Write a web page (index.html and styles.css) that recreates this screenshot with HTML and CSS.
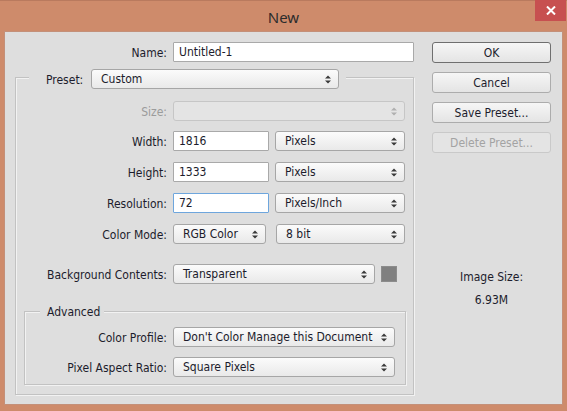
FILE: index.html
```html
<!DOCTYPE html>
<html>
<head>
<meta charset="utf-8">
<title>New</title>
<link rel="stylesheet" href="styles.css">
</head>
<body>
<div class="window">
  <div class="titlebar">
    <span></span>
    <div class="title">New</div>
    <div class="close"><svg width="10" height="9" viewBox="0 0 10 9"><path d="M1 0.5 L9 8.5 M9 0.5 L1 8.5" stroke="#fff" stroke-width="2"/></svg></div>
  </div>
  <div class="dialog">
    <div class="form">
      <div class="row">
        <div class="lbl lbl-top">Name:</div>
        <div class="input w-name">Untitled-1</div>
      </div>
      <div class="group outer">
        <div class="legend preset">
          <div class="legend-lbl">Preset:</div>
          <div class="select w-preset">Custom<svg class="arr" width="6" height="9" viewBox="0 0 6 9"><path d="M0 3.5 L3 0.5 L6 3.5Z M0 5.5 L3 8.5 L6 5.5Z" fill="#3a3a3a"/></svg></div>
        </div>
        <div class="row r-size">
          <div class="lbl lbl-mid dim">Size:</div>
          <div class="select disabled w-size"><svg class="arr" width="6" height="9" viewBox="0 0 6 9"><path d="M0 3.5 L3 0.5 L6 3.5Z M0 5.5 L3 8.5 L6 5.5Z" fill="#b0b0b0"/></svg></div>
        </div>
        <div class="row r-std">
          <div class="lbl lbl-mid">Width:</div>
          <div class="input w-num">1816</div>
          <div class="select w-unit">Pixels<svg class="arr" width="6" height="9" viewBox="0 0 6 9"><path d="M0 3.5 L3 0.5 L6 3.5Z M0 5.5 L3 8.5 L6 5.5Z" fill="#3a3a3a"/></svg></div>
        </div>
        <div class="row r-std">
          <div class="lbl lbl-mid">Height:</div>
          <div class="input w-num">1333</div>
          <div class="select w-unit">Pixels<svg class="arr" width="6" height="9" viewBox="0 0 6 9"><path d="M0 3.5 L3 0.5 L6 3.5Z M0 5.5 L3 8.5 L6 5.5Z" fill="#3a3a3a"/></svg></div>
        </div>
        <div class="row r-std">
          <div class="lbl lbl-mid">Resolution:</div>
          <div class="input w-num focus">72</div>
          <div class="select w-unit">Pixels/Inch<svg class="arr" width="6" height="9" viewBox="0 0 6 9"><path d="M0 3.5 L3 0.5 L6 3.5Z M0 5.5 L3 8.5 L6 5.5Z" fill="#3a3a3a"/></svg></div>
        </div>
        <div class="row r-std">
          <div class="lbl lbl-mid">Color Mode:</div>
          <div class="select w-mode">RGB Color<svg class="arr" width="6" height="9" viewBox="0 0 6 9"><path d="M0 3.5 L3 0.5 L6 3.5Z M0 5.5 L3 8.5 L6 5.5Z" fill="#3a3a3a"/></svg></div>
          <div class="select w-bit">8 bit<svg class="arr" width="6" height="9" viewBox="0 0 6 9"><path d="M0 3.5 L3 0.5 L6 3.5Z M0 5.5 L3 8.5 L6 5.5Z" fill="#3a3a3a"/></svg></div>
        </div>
        <div class="row r-bg">
          <div class="lbl lbl-mid">Background Contents:</div>
          <div class="select w-bg">Transparent<svg class="arr" width="6" height="9" viewBox="0 0 6 9"><path d="M0 3.5 L3 0.5 L6 3.5Z M0 5.5 L3 8.5 L6 5.5Z" fill="#3a3a3a"/></svg></div>
          <div class="swatch"></div>
        </div>
        <div class="group adv">
          <div class="legend adv-legend">Advanced</div>
          <div class="row r-prof">
            <div class="lbl lbl-in">Color Profile:</div>
            <div class="select w-prof">Don't Color Manage this Document<svg class="arr" width="6" height="9" viewBox="0 0 6 9"><path d="M0 3.5 L3 0.5 L6 3.5Z M0 5.5 L3 8.5 L6 5.5Z" fill="#3a3a3a"/></svg></div>
          </div>
          <div class="row r-par">
            <div class="lbl lbl-in">Pixel Aspect Ratio:</div>
            <div class="select w-prof">Square Pixels<svg class="arr" width="6" height="9" viewBox="0 0 6 9"><path d="M0 3.5 L3 0.5 L6 3.5Z M0 5.5 L3 8.5 L6 5.5Z" fill="#3a3a3a"/></svg></div>
          </div>
        </div>
      </div>
    </div>
    <div class="side">
      <div class="btn default">OK</div>
      <div class="btn">Cancel</div>
      <div class="btn">Save Preset...</div>
      <div class="btn btn-disabled">Delete Preset...</div>
      <div class="imgsize-lbl">Image Size:</div>
      <div class="imgsize-val">6.93M</div>
    </div>
  </div>
</div>
</body>
</html>
```
FILE: styles.css
```css
* { box-sizing: border-box; }
html, body { margin: 0; padding: 0; }
body {
  width: 567px;
  height: 411px;
  background: #cf8b6c;
  overflow: hidden;
}
.window {
  width: 567px;
  height: 411px;
  background: #ce8b6b;
  border-top: 1px solid #b97a5e;
  display: flex;
  flex-direction: column;
}
.titlebar {
  height: 30px;
  display: grid;
  grid-template-columns: 1fr auto 1fr;
}
.title {
  font-family: "Noto Sans", "Open Sans", sans-serif;
  font-size: 15px;
  color: #2c2c2c;
  align-self: center;
  padding-top: 2px;
}
.close {
  justify-self: end;
  align-self: start;
  width: 31px;
  height: 21px;
  margin-right: 1px;
  margin-top: -1px;
  background: #c75050;
  display: flex;
  align-items: center;
  justify-content: center;
}
.dialog {
  margin: 0 4px;
  height: 374px;
  background: #dedede;
  border: 1px solid #c49079;
  display: flex;
  align-items: flex-start;
  padding: 10px 0 0 10px;
  font-family: "DejaVu Sans Condensed", "DejaVu Sans", sans-serif;
  font-stretch: condensed;
  font-size: 12px;
  color: #1c1c2c;
}
.form {
  width: 399px;
  display: flex;
  flex-direction: column;
}
.row {
  display: flex;
  align-items: center;
  height: 20px;
}
.lbl {
  text-align: right;
  margin-right: 6px;
  white-space: nowrap;
  padding-top: 1px;
}
.lbl-top { width: 152px; }
.lbl-mid { width: 151px; }
.lbl-in { width: 142px; }
.dim { color: #9b9b9b; }

.input {
  height: 20px;
  background: #fff;
  border: 1px solid #a9a9a9;
  border-radius: 1px;
  padding: 1px 5px 0;
  line-height: 17px;
  white-space: nowrap;
}
.input.focus { border-color: #6ea6dd; }
.w-name { width: 241px; }
.w-num { width: 96px; margin-right: 6px; }

.select {
  position: relative;
  height: 20px;
  background: linear-gradient(#fbfbfb, #e9e9e9);
  border: 1px solid #a6a6a6;
  border-radius: 3px;
  padding: 1px 20px 0 9px;
  line-height: 17px;
  white-space: nowrap;
}
.select .arr {
  position: absolute;
  right: 7px;
  top: 5px;
}
.select.disabled {
  background: #e4e4e4;
  border-color: #c6c6c6;
}
.w-preset { width: 248px; }
.w-size { width: 232px; }
.w-unit { width: 130px; }
.w-mode { width: 93px; margin-right: 10px; }
.w-bit { width: 129px; }
.w-bg { width: 202px; margin-right: 6px; }
.w-prof { width: 222px; }
.swatch {
  width: 16px;
  height: 16px;
  background: #808080;
  border: 1px solid #8c8c8c;
}

.group {
  border: 1px solid #c2c2c2;
  box-shadow: 1px 1px 0 #f2f2f2, inset 1px 1px 0 #f2f2f2;
  display: flex;
  flex-direction: column;
}
.outer {
  margin-top: 15px;
  width: 399px;
  padding-bottom: 9px;
}
.legend {
  align-self: flex-start;
  background: #dedede;
  display: flex;
  align-items: center;
}
.preset {
  margin-top: -9px;
  margin-left: 13px;
  padding: 0 7px 0 17px;
}
.legend-lbl { width: 45px; padding-top: 1px; }
.r-size { margin-top: 12px; }
.r-std { margin-top: 10px; }
.r-std + .r-std { margin-top: 11px; }
.r-bg { margin-top: 20px; }

.adv {
  margin-top: 27px;
  margin-left: 8px;
  width: 382px;
  padding-bottom: 7px;
}
.adv-legend {
  margin-top: -7px;
  margin-left: 15px;
  padding: 0 4px 0 7px;
  height: 14px;
  line-height: 14px;
}
.r-prof { margin-top: 8px; }
.r-par { margin-top: 10px; }

.side {
  margin-left: 18px;
  width: 119px;
  display: flex;
  flex-direction: column;
  align-items: stretch;
}
.btn {
  height: 21px;
  border: 1px solid #acacac;
  border-radius: 3px;
  background: linear-gradient(#f6f6f6, #e4e4e4);
  text-align: center;
  padding-top: 1px;
  line-height: 18px;
  white-space: nowrap;
}
.btn + .btn { margin-top: 9px; }
.btn.default { border-color: #6f6f6f; }
.btn-disabled {
  color: #a3a3a3;
  border-color: #c9c9c9;
  background: #e4e4e4;
}
.imgsize-lbl {
  margin-top: 116px;
  text-align: center;
  line-height: 16px;
}
.imgsize-val {
  margin-top: 7px;
  text-align: center;
  line-height: 16px;
}
```
